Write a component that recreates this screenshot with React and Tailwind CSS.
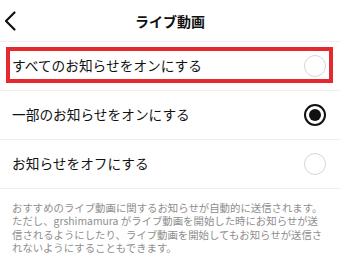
import React from 'react'

const font = { fontFamily: '"Noto Sans CJK JP", "Noto Sans", sans-serif' }

function Radio({ checked }) {
  if (checked) {
    return (
      <span className="flex h-[22px] w-[22px] items-center justify-center rounded-full border-[2px] border-[#111]">
        <span className="h-[12px] w-[12px] rounded-full bg-[#111]" />
      </span>
    )
  }
  return <span className="h-[22px] w-[22px] rounded-full border border-[#d6d6d6]" />
}

const options = [
  { id: 'all', label: 'すべてのお知らせをオンにする', checked: false, marked: true },
  { id: 'some', label: '一部のお知らせをオンにする', checked: true },
  { id: 'off', label: 'お知らせをオフにする', checked: false },
]

export default function App() {
  return (
    <div className="h-[262px] w-[340px] overflow-hidden bg-white text-[#111]" style={font}>
      {/* Header */}
      <div className="grid h-[42px] grid-cols-[40px_1fr_40px] items-center border-b border-[#efefef]">
        <svg width="20" height="22" viewBox="0 0 20 22" className="ml-[2px]">
          <path d="M12.5 2.5 L4 11 L12.5 19.5" fill="none" stroke="#111" strokeWidth="2.2" strokeLinecap="round" strokeLinejoin="round" />
        </svg>
        <h1 className="text-center text-[14px] font-semibold leading-none">ライブ動画</h1>
        <span />
      </div>

      {/* Options */}
      {options.map((o) => (
        <div key={o.id} className="relative flex h-[49px] items-center justify-between border-b border-[#efefef] pl-[12px] pr-[14px]">
          <span className="text-[13.7px] leading-none">{o.label}</span>
          <Radio checked={o.checked} />
          {o.marked && (
            <span className="pointer-events-none absolute left-[6px] top-[5px] h-[36px] w-[327px] border-[4px] border-[#e52a2f]" />
          )}
        </div>
      ))}

      {/* Description */}
      <p className="px-[12px] pt-[12px] text-[10.4px] leading-[13.3px] text-[#8e8e8e]">
        おすすめのライブ動画に関するお知らせが自動的に送信されます。<br />
        ただし、grshimamura がライブ動画を開始した時にお知らせが送<br />
        信されるようにしたり、ライブ動画を開始してもお知らせが送信さ<br />
        れないようにすることもできます。
      </p>
    </div>
  )
}
